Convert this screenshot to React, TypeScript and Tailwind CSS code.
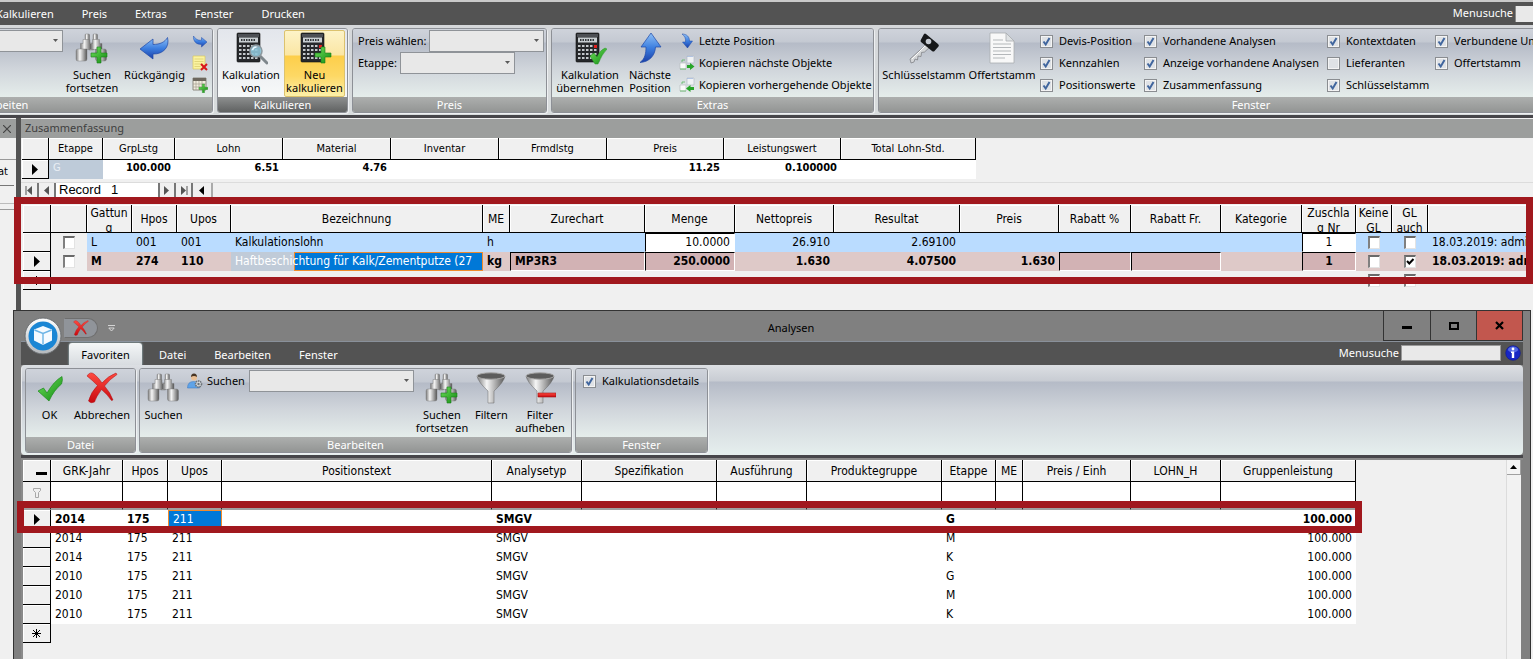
import { useState } from "react";
import type { ReactNode } from "react";
import clsx from "clsx";

const RIBBON_FONT = "font-['Noto_Sans','Open_Sans',sans-serif]";
const GRID_FONT = "font-['DejaVu_Sans_Condensed','DejaVu_Sans',sans-serif]";

/* ---------- Icons ---------- */

function Defs() {
  return (
    <svg className="absolute size-0" aria-hidden="true">
      <defs>
        <linearGradient id="metal" x1="0" x2="1" y1="0" y2="0">
          <stop offset="0" stopColor="#7a7a7a" />
          <stop offset="0.35" stopColor="#f6f6f6" />
          <stop offset="0.7" stopColor="#a2a2a2" />
          <stop offset="1" stopColor="#565656" />
        </linearGradient>
        <linearGradient id="green" x1="0" x2="1" y1="0" y2="1">
          <stop offset="0" stopColor="#6fe05c" />
          <stop offset="1" stopColor="#128a12" />
        </linearGradient>
        <linearGradient id="blue" x1="0" x2="0" y1="0" y2="1">
          <stop offset="0" stopColor="#8fc0f5" />
          <stop offset="0.5" stopColor="#3d7fe0" />
          <stop offset="1" stopColor="#1a3fa8" />
        </linearGradient>
        <linearGradient id="red" x1="0" x2="0" y1="0" y2="1">
          <stop offset="0" stopColor="#ff4a40" />
          <stop offset="1" stopColor="#c80a10" />
        </linearGradient>
        <linearGradient id="orb" x1="0" x2="0" y1="0" y2="1">
          <stop offset="0" stopColor="#ffffff" />
          <stop offset="1" stopColor="#b4b8bc" />
        </linearGradient>
      </defs>
    </svg>
  );
}

function Plus({ x, y, s = 1 }: { x: number; y: number; s?: number }) {
  return (
    <path
      transform={`translate(${x} ${y}) scale(${s})`}
      d="M6 0h4v6H16v4h-6v6H6v-6H0V6h6z"
      fill="url(#green)"
      stroke="#1a7d1a"
      strokeWidth="0.6"
    />
  );
}

function Binoculars({ plus }: { plus?: boolean }) {
  return (
    <svg width="34" height="32" viewBox="0 0 34 32">
      <g stroke="#777" strokeWidth="0.4" fill="url(#metal)">
        <rect x="10" y="2" width="4.500" height="6" rx="1" />
        <rect x="18" y="2" width="4.500" height="6" rx="1" />
        <rect x="14" y="11" width="4.500" height="7" />
        <path d="M8 7.500h7v4h1.200v6H5.500v-6H8z" />
        <path d="M17.500 7.500h7v4H27v6H16.500v-6h1z" />
        <path d="M3 17h9v10q0 2-2 2H3q-2 0-2-2v-8q0-2 2-2z" />
        <path d="M29.500 17h-9v10q0 2 2 2h7q2 0 2-2v-8q0-2-2-2z" />
      </g>
      {plus && <Plus x={16} y={15} />}
    </svg>
  );
}

function BackArrow({ size = 32 }: { size?: number }) {
  return (
    <svg width={size} height={size} viewBox="0 0 32 32">
      <path
        d="M1 17 14 7v5.500C21 12.500 26 10 28.500 5.500 31 15 24 22.500 14 22v5z"
        fill="url(#blue)"
        stroke="#1f49a8"
        strokeWidth="0.7"
      />
    </svg>
  );
}

function ForwardArrow() {
  return (
    <svg width="16" height="16" viewBox="0 0 16 16">
      <path d="M15 9 9.500 14v-2.500C4 11.500 1 8 1.500 3 4 6.500 6 7.500 9.500 7.200V4.500z" fill="url(#blue)" stroke="#1f49a8" strokeWidth="0.5" />
    </svg>
  );
}

function UpArrow() {
  return (
    <svg width="32" height="32" viewBox="0 0 32 32">
      <path d="M17 1 27 15h-5.500C21 24 15 30 6 30.500 11 27 12 21 12 15H7z" fill="url(#blue)" stroke="#1f49a8" strokeWidth="0.7" />
    </svg>
  );
}

function LastArrow() {
  return (
    <svg width="16" height="16" viewBox="0 0 16 16">
      <path d="M3 1C8 1 10.500 4 10.500 8H13.500L8.500 15 3.500 9H6.500C7 5 5.500 3 3 1z" fill="url(#blue)" stroke="#1f49a8" strokeWidth="0.5" />
    </svg>
  );
}

function NoteDelete() {
  return (
    <svg width="16" height="16" viewBox="0 0 16 16">
      <path d="M1 1h12v13H1z" fill="#fbf3a0" stroke="#d8c860" strokeWidth="0.7" />
      <path d="M2.500 4h9M2.500 6.500h9M2.500 9h9M2.500 11.500h6" stroke="#d6c86a" strokeWidth="0.7" />
      <path d="m9 9 6 6m0-6-6 6" stroke="#d8161c" strokeWidth="2" />
    </svg>
  );
}

function TableAdd() {
  return (
    <svg width="16" height="16" viewBox="0 0 16 16">
      <path d="M1 1h13v12H1z" fill="#f1ede0" stroke="#7a7468" strokeWidth="0.8" />
      <path d="M1 1h13v3H1z" fill="#6d685e" />
      <path d="M1 7h13M1 10h13M4 4v9M7 4v9M10 4v9" stroke="#a59d8c" strokeWidth="0.7" />
      <Plus x={7} y={7} s={0.55} />
    </svg>
  );
}

function Calculator({ kind }: { kind: "search" | "plus" | "check" }) {
  return (
    <svg width="34" height="34" viewBox="0 0 34 34">
      <rect x="3" y="1" width="23" height="29" rx="1" fill="#26282b" stroke="#111" strokeWidth="0.6" />
      <rect x="4" y="2" width="21" height="3" fill="#4d5055" />
      <rect x="5" y="5.500" width="19" height="5" fill="#c8ced2" />
      <path d="M7 8h15" stroke="#33373a" strokeWidth="2" strokeDasharray="1.500 1" />
      {[14, 18, 22, 26].map((y) => (
        <path key={y} d={`M5 ${y}h19`} stroke="#c4c8cc" strokeWidth="2" strokeDasharray="2.500 1.500" />
      ))}
      <rect x="21" y="13" width="3" height="3" fill="#e02020" />
      {kind === "search" && (
        <>
          <path d="m26 24 7 7" stroke="#7f878c" strokeWidth="3" strokeLinecap="round" />
          <circle cx="22" cy="19" r="6" fill="#8fc4d8" fillOpacity="0.9" stroke="#8c989e" strokeWidth="1.500" />
          <path d="M18.500 18q1-3 4-3" stroke="#e8f8ff" strokeWidth="1.500" fill="none" />
        </>
      )}
      {kind === "plus" && <Plus x={17} y={15} />}
      {kind === "check" && (
        <path d="m17 24 4-3 3 4q3-7 8-9l2 1q-5 5-9 15h-3z" fill="url(#green)" stroke="#2a9a2a" strokeWidth="0.5" />
      )}
    </svg>
  );
}

function KeyIcon() {
  return (
    <svg width="32" height="32" viewBox="0 0 32 32">
      <path d="M20 11 2 27l1 4 3-1 1-3 2.500 1 .5-4 3 .5.500-4 3-.5L23 14z" fill="#d4d6d8" stroke="#77797c" strokeWidth="0.7" />
      <path d="M18 13 4 27" stroke="#fafafa" strokeWidth="1" />
      <path d="m18 2 12 10q1.500 1 .5 2.500l-4 4.500q-1 1-2.500 0L13 10q-1-1 0-2.500L16 2q1-1 2 0z" fill="#16181a" />
      <circle cx="20.500" cy="9.500" r="2.800" fill="#c3c8d0" />
    </svg>
  );
}

function DocIcon() {
  return (
    <svg width="32" height="32" viewBox="0 0 32 32">
      <path d="M4 1h16l8 8v22H4z" fill="#f8f8f8" stroke="#a9adb0" strokeWidth="0.8" />
      <path d="M20 1v8h8z" fill="#dfe2e4" stroke="#a9adb0" strokeWidth="0.8" />
      <path d="M7 8h10M7 12h18M7 15.500h18M7 19h18M7 22.500h18M7 26h12" stroke="#b4b7ba" strokeWidth="1.200" />
    </svg>
  );
}

function CopyIcon({ back }: { back?: boolean }) {
  return (
    <svg width="16" height="16" viewBox="0 0 16 16">
      <path d="M8 1h7v7H8z" fill="#f0f2f4" stroke="#b5bcc6" strokeWidth="0.7" />
      <path d="M8.500 1.500h6" stroke="#88a8e0" strokeWidth="1" strokeDasharray="1 1" />
      <path d="M1 8h6v6H1z" fill="#fafafa" stroke="#b8bdc0" strokeWidth="0.7" />
      <path d="M1 14h6M3 7V5h3" stroke="#5cb860" strokeWidth="0.8" fill="none" />
      {back ? (
        <path d="M7 11.500 11.500 8v2H15v3h-3.500v2z" fill="#27a528" />
      ) : (
        <path d="M15.500 11.500 11 8v2H8v3h3v2z" fill="#27a528" />
      )}
    </svg>
  );
}

function CheckIcon() {
  return (
    <svg width="32" height="32" viewBox="0 0 32 32">
      <path d="m4 19 5.500-3 3.500 5Q20 9 28 4.500q1 4-.5 7.500Q20 18 15 29z" fill="url(#green)" stroke="#1c8a1c" strokeWidth="0.7" />
    </svg>
  );
}

function CrossIcon({ size = 32 }: { size?: number }) {
  return (
    <svg width={size} height={size} viewBox="0 0 32 32">
      <path
        d="M1 4Q4-1 8 2q5 4 8 9Q22 4 30 1l1 1.500Q24 7 18.500 14 24 20 27 28l-1.500.5Q21 22 15.500 17.500 10 25 8.500 30q-4 2-6-1Q5 20 11.500 13.500 6 8 1 4z"
        fill="url(#red)"
        stroke="#b00c10"
        strokeWidth="0.5"
      />
    </svg>
  );
}

function FunnelIcon({ minus }: { minus?: boolean }) {
  return (
    <svg width="32" height="32" viewBox="0 0 32 32">
      <path d="M2 4q1 6 11 15v12h6V19Q29 10 30 4z" fill="url(#metal)" stroke="#666" strokeWidth="0.5" />
      <ellipse cx="16" cy="4" rx="14" ry="3.200" fill="#5c5c5c" stroke="#a5a5a5" strokeWidth="1" />
      {minus && <path d="M14 21h18v4H14z" fill="url(#red)" stroke="#a01014" strokeWidth="0.6" />}
    </svg>
  );
}

function UserIcon() {
  return (
    <svg width="16" height="16" viewBox="0 0 16 16">
      <circle cx="7" cy="4.500" r="3" fill="#eabf94" />
      <path d="M4 4q0-3.500 3-3.500T10 4Q7 2 4 4z" fill="#473423" />
      <path d="M.5 15q0-6.500 6-6.500t6 6.500z" fill="#5fa3e8" stroke="#3676c0" strokeWidth="0.5" />
      <circle cx="11.500" cy="11" r="3" fill="#d8dce0" stroke="#6b7278" strokeWidth="1.600" strokeDasharray="1.500 0.700" />
      <circle cx="11.500" cy="11" r="1.200" fill="#6b7278" />
    </svg>
  );
}

function OrbIcon() {
  return (
    <svg width="38" height="38" viewBox="0 0 38 38">
      <circle cx="19" cy="19" r="18" fill="url(#orb)" stroke="#6c6f72" strokeWidth="1" />
      <circle cx="19" cy="19" r="14.500" fill="#1b86d4" />
      <path d="m19 9 9 3.500v11L19 28l-9-4.500v-11z" fill="#f4faff" />
      <path d="m10.500 13 8.500 3.500 8.500-3.500M19 16.500V27.500" stroke="#6cb4e6" strokeWidth="1.400" fill="none" />
    </svg>
  );
}

function InfoIcon() {
  return (
    <svg width="16" height="16" viewBox="0 0 16 16">
      <circle cx="8" cy="8" r="7.300" fill="#1726c4" stroke="#0d1690" strokeWidth="0.6" />
      <ellipse cx="8" cy="4.500" rx="5" ry="3" fill="#6f86f4" fillOpacity="0.7" />
      <circle cx="8" cy="4" r="1.400" fill="#fff" />
      <path d="M6 6.500h3.200V13H6.800V8H6z" fill="#fff" />
    </svg>
  );
}

function Triangle({ flip, bar }: { flip?: boolean; bar?: boolean }) {
  return (
    <svg width="9" height="9" viewBox="0 0 9 9" className={flip ? "rotate-180" : ""}>
      <path d="M2 0v9l5-4.500z" fill="currentColor" />
      {bar && <path d="M8 0v9" stroke="currentColor" strokeWidth="1" />}
    </svg>
  );
}

function RowPointer() {
  return (
    <svg width="6" height="11" viewBox="0 0 6 11" className="mx-auto">
      <path d="M0 0v11l6-5.500z" fill="#000" />
    </svg>
  );
}

function StarIcon() {
  return (
    <svg width="9" height="9" viewBox="0 0 9 9" className="mx-auto">
      <path d="M4.500 0v9M0 4.500h9M1 1l7 7M8 1 1 8" stroke="#000" strokeWidth="1" />
    </svg>
  );
}

/* ---------- Ribbon parts ---------- */

function Group({ label, className, active, children }: { label: string; className?: string; active?: boolean; children: ReactNode }) {
  return (
    <section className={clsx("flex h-[85px] shrink-0 flex-col overflow-hidden rounded-[3px] border border-[#8d9096] shadow-[1px_1px_0_#eef0f2]", className)}>
      <div
        className={clsx(
          "flex h-[68px] items-start pt-px",
          active
            ? "bg-linear-to-b from-[#e3e6ec] via-[#eceef1] to-[#f7f9f9]"
            : "bg-[linear-gradient(#cfd3db,#c4c9d2_13px,#b5bbc7_14px,#d0d5db_40px,#e5edeb)]"
        )}
      >
        {children}
      </div>
      <h2
        className={clsx(
          "flex h-[15px] items-center justify-center text-[11px] leading-[14px] text-white",
          active ? "bg-linear-to-b from-[#8e9090] to-[#606262]" : "bg-linear-to-b from-[#adafae] to-[#939594]"
        )}
      >
        {label}
      </h2>
    </section>
  );
}

function BigButton({ icon, lines, className, hot }: { icon: ReactNode; lines: string[]; className: string; hot?: boolean }) {
  return (
    <button
      type="button"
      className={clsx(
        "flex h-[67px] shrink-0 flex-col items-center overflow-visible pt-[2px] text-[11px] leading-[13px] whitespace-nowrap text-black",
        hot && "rounded-[2px] border border-[#dcc26e] bg-[linear-gradient(#fdf3c8,#fbe6a4_24px,#fdce4a_25px,#fdd865_45px,#fdf0a8)] pt-px",
        className
      )}
    >
      <span className="flex h-9 items-start justify-center">{icon}</span>
      {lines.map((l) => (
        <span key={l}>{l}</span>
      ))}
    </button>
  );
}

function SmallButton({ icon, label }: { icon: ReactNode; label: string }) {
  return (
    <button type="button" className="flex h-[22px] items-center gap-1 text-[11px] whitespace-nowrap text-black">
      {icon}
      {label}
    </button>
  );
}

function Combo({ label, className }: { label: string; className: string }) {
  return (
    <span className={clsx("relative block h-[22px] shrink-0", className)}>
      <select aria-label={label} className="block size-full appearance-none border border-[#8f9398] bg-[#e8e8e8] text-[11px]" />
      <svg width="5" height="3" viewBox="0 0 5 3" className="pointer-events-none absolute top-[9px] right-[5px]">
        <path d="M0 0h5L2.500 3z" fill="#5a5a5a" />
      </svg>
    </span>
  );
}

function RibbonCheck({ label, on = true }: { label: string; on?: boolean }) {
  const [checked, setChecked] = useState(on);
  return (
    <label className="flex h-[22px] items-center gap-[6px] text-[11px] whitespace-nowrap text-black">
      <span className="relative block size-[13px]">
        <input
          type="checkbox"
          checked={checked}
          onChange={() => setChecked(!checked)}
          className="block size-[13px] appearance-none border border-[#8a8d91] bg-[#dfe2e6] shadow-[inset_0_0_0_1px_#f4f4f4]"
        />
        {checked && (
          <svg width="13" height="13" viewBox="0 0 13 13" className="pointer-events-none absolute inset-0">
            <path d="m3.500 6.500 2.200 3L9.500 3" stroke="#41669e" strokeWidth="2" fill="none" />
          </svg>
        )}
      </span>
      {label}
    </label>
  );
}

/* ---------- Grid parts ---------- */

function HeadCell({ children, label }: { children?: ReactNode; label?: string }) {
  return (
    <th className="border-r border-b border-black bg-[#f0f0f0] px-0 pt-px pb-0 align-middle font-normal shadow-[inset_1px_1px_0_#fff]" aria-label={label}>
      {children}
    </th>
  );
}

function RowHead({ children }: { children?: ReactNode }) {
  return (
    <th className="border-r border-b border-black bg-[#f0f0f0] p-0 align-middle shadow-[inset_1px_1px_0_#fff]">{children}</th>
  );
}

function GridCheck({ label, on = false }: { label: string; on?: boolean }) {
  const [checked, setChecked] = useState(on);
  return (
    <span className="relative mx-auto block h-[13px] w-3">
      <input
        type="checkbox"
        aria-label={label}
        checked={checked}
        onChange={() => setChecked(!checked)}
        className="block h-[13px] w-3 appearance-none border-t-2 border-r border-b border-l-2 border-t-[#696969] border-r-[#e3e3e3] border-b-[#e3e3e3] border-l-[#808080] bg-white"
      />
      {checked && (
        <svg width="12" height="13" viewBox="0 0 12 13" className="pointer-events-none absolute inset-0">
          <path d="m3 6 2.300 2.500L9.500 4" stroke="#000" strokeWidth="2" fill="none" />
        </svg>
      )}
    </span>
  );
}

/* ---------- Main window ---------- */

function MainRibbon() {
  return (
    <header className={RIBBON_FONT}>
      <div className="h-[2px] bg-[#c9c9c9]" />
      <nav className="flex h-[23px] items-center bg-[#535353] text-[11px] text-white">
        <div className="-ml-1 flex flex-1 gap-[28px] pt-[2px]">
          {["Kalkulieren", "Preis", "Extras", "Fenster", "Drucken"].map((t) => (
            <button type="button" key={t}>
              {t}
            </button>
          ))}
        </div>
        <label htmlFor="main-search" className="pr-[2px]">
          Menusuche
        </label>
        <input id="main-search" className="h-4 w-[18px] border-l border-[#8a8a8a] bg-[#e9e9e9]" />
      </nav>
      <div className="flex gap-1 overflow-hidden bg-linear-to-b from-[#d5d7da] to-[#d8dcdd] pt-[3px] pb-[2px]">
        <Group label="Bearbeiten" className="-ml-[213px] w-[426px]">
          <div className="flex flex-1 items-start justify-end">
            <Combo label="Suche" className="w-[90px]" />
            <BigButton icon={<Binoculars plus />} lines={["Suchen", "fortsetzen"]} className="w-[58px]" />
            <BigButton icon={<BackArrow />} lines={["Rückgängig"]} className="w-[67px]" />
            <div className="flex w-[24px] flex-col items-center gap-[6px] pt-[3px]">
              <button type="button" aria-label="Wiederholen"><ForwardArrow /></button>
              <button type="button" aria-label="Notiz löschen"><NoteDelete /></button>
              <button type="button" aria-label="Tabelle hinzufügen"><TableAdd /></button>
            </div>
          </div>
        </Group>
        <Group label="Kalkulieren" className="w-[131px]" active>
          <BigButton icon={<Calculator kind="search" />} lines={["Kalkulation", "von"]} className="w-[66px]" />
          <BigButton icon={<Calculator kind="plus" />} lines={["Neu", "kalkulieren"]} className="w-[61px]" hot />
        </Group>
        <Group label="Preis" className="w-[195px]">
          <div className="pl-[5px] text-[11px]">
            <div className="flex items-center">
              <span className="w-[71px]">Preis wählen:</span>
              <Combo label="Preis wählen" className="w-[115px]" />
            </div>
            <div className="flex items-center">
              <span className="w-[42px]">Etappe:</span>
              <Combo label="Etappe" className="w-[115px]" />
            </div>
          </div>
        </Group>
        <Group label="Extras" className="w-[323px]">
          <BigButton icon={<Calculator kind="check" />} lines={["Kalkulation", "übernehmen"]} className="w-[76px]" />
          <BigButton icon={<UpArrow />} lines={["Nächste", "Position"]} className="w-[44px]" />
          <div className="pl-[7px]">
            <SmallButton icon={<LastArrow />} label="Letzte Position" />
            <SmallButton icon={<CopyIcon />} label="Kopieren nächste Objekte" />
            <SmallButton icon={<CopyIcon back />} label="Kopieren vorhergehende Objekte" />
          </div>
        </Group>
        <Group label="Fenster" className="w-[746px]">
          <BigButton icon={<KeyIcon />} lines={["Schlüsselstamm"]} className="w-[90px]" />
          <BigButton icon={<DocIcon />} lines={["Offertstamm"]} className="w-[66px]" />
          <div className="grid grid-cols-[104px_183px_108px_auto] pl-[5px]">
            <RibbonCheck label="Devis-Position" />
            <RibbonCheck label="Vorhandene Analysen" />
            <RibbonCheck label="Kontextdaten" />
            <RibbonCheck label="Verbundene Umsätze" />
            <RibbonCheck label="Kennzahlen" />
            <RibbonCheck label="Anzeige vorhandene Analysen" />
            <RibbonCheck label="Lieferanten" on={false} />
            <RibbonCheck label="Offertstamm" />
            <RibbonCheck label="Positionswerte" />
            <RibbonCheck label="Zusammenfassung" />
            <RibbonCheck label="Schlüsselstamm" />
          </div>
        </Group>
      </div>
      <div className="h-[3px] bg-[#47464a]" />
    </header>
  );
}

const SUMMARY = [
  { name: "Etappe", value: "G" },
  { name: "GrpLstg", value: "100.000" },
  { name: "Lohn", value: "6.51" },
  { name: "Material", value: "4.76" },
  { name: "Inventar", value: "" },
  { name: "Frmdlstg", value: "" },
  { name: "Preis", value: "11.25" },
  { name: "Leistungswert", value: "0.100000" },
  { name: "Total Lohn-Std.", value: "" },
];
const SUMMARY_WIDTHS = [27, 54, 72, 108, 108, 108, 108, 117, 117, 135];

function Summary() {
  return (
    <section>
      <h2 className={clsx("mt-px flex h-[19px] items-center bg-[#9c9e9d] pl-1 text-[11px] text-[#3f3f3f]", RIBBON_FONT)}>
        Zusammenfassung
      </h2>
      <table className={clsx("ml-px w-[954px] table-fixed border-separate border-spacing-0 text-[11px] leading-[14px]", GRID_FONT)}>
        <colgroup>
          {SUMMARY_WIDTHS.map((w, i) => (
            <col key={i} style={{ width: w }} />
          ))}
        </colgroup>
        <thead>
          <tr className="h-[22px]">
            <HeadCell label="Zeile" />
            {SUMMARY.map((c) => (
              <HeadCell key={c.name}>{c.name}</HeadCell>
            ))}
          </tr>
        </thead>
        <tbody>
          <tr className="h-[19px] bg-white">
            <RowHead>
              <RowPointer />
            </RowHead>
            {SUMMARY.map((c, i) => (
              <td
                key={c.name}
                className={clsx(
                  "px-1 pt-0 pb-1",
                  i === 0 ? "bg-[#becbd9] text-left font-normal text-[#e9eef4]" : "text-right font-bold"
                )}
              >
                {c.value}
              </td>
            ))}
          </tr>
        </tbody>
      </table>
      <div className="mt-[3px] flex h-[15px] items-center border-t border-[#dcdcdc] pl-px font-['Liberation_Sans',Arial,sans-serif] text-[13px] text-[#555]">
        <button type="button" aria-label="Erster" className="flex h-[14px] w-[17px] items-center justify-center border-r-2 border-[#777]"><Triangle flip bar /></button>
        <button type="button" aria-label="Zurück" className="flex h-[14px] w-[17px] items-center justify-center border-r-2 border-[#777]"><Triangle flip /></button>
        <label htmlFor="record" className="h-[14px] bg-white px-[3px] leading-[14px] text-black">Record</label>
        <input id="record" defaultValue="1" className="h-[14px] w-[54px] bg-white pl-[7px] text-black" />
        <button type="button" aria-label="Weiter" className="flex h-[14px] w-[18px] items-center justify-center border-x-2 border-[#777]"><Triangle /></button>
        <button type="button" aria-label="Letzter" className="flex h-[14px] w-[17px] items-center justify-center border-r-2 border-[#777]"><Triangle bar /></button>
        <button type="button" aria-label="Links" className="flex h-[14px] w-[20px] items-center justify-center border-r-2 border-[#aaa] text-black"><Triangle flip /></button>
      </div>
    </section>
  );
}

const POS_WIDTHS = [28, 36, 45, 45, 54, 252, 27, 135, 90, 99, 126, 99, 72, 90, 81, 54, 36, 36];
const POS_HEADS: string[][] = [
  [""], [""], ["Gattun", "g"], ["Hpos"], ["Upos"], ["Bezeichnung"], ["ME"], ["Zurechart"], ["Menge"], ["Nettopreis"], ["Resultat"],
  ["Preis"], ["Rabatt %"], ["Rabatt Fr."], ["Kategorie"], ["Zuschla", "g Nr"], ["Keine", "GL"], ["GL", "auch"], [""],
];
const SUNKEN = "border border-t-black border-l-black border-r-white border-b-white";

function PositionGrid() {
  return (
    <table className={clsx("mt-2 ml-[2px] w-[calc(100%-2px)] min-w-[1510px] table-fixed border-separate border-spacing-0 text-[12px] leading-[15px]", GRID_FONT)}>
      <colgroup>
        {POS_WIDTHS.map((w, i) => (
          <col key={i} style={{ width: w }} />
        ))}
        <col />
      </colgroup>
      <thead>
        <tr className="h-[28px]">
          {POS_HEADS.map((lines, i) => (
            <HeadCell key={i} label={lines.join("") || "Spalte"}>
              <div className={clsx("flex h-[26px] flex-col items-center overflow-hidden whitespace-nowrap", lines.length === 1 && "justify-center")}>
                {lines.map((l) => (
                  <span key={l}>{l}</span>
                ))}
              </div>
            </HeadCell>
          ))}
        </tr>
      </thead>
      <tbody className="whitespace-nowrap">
        <tr className="h-[19px] bg-[#badcff] *:px-1 *:py-0 *:align-middle">
          <RowHead />
          <td className="bg-[#f0f0f0]"><GridCheck label="Zeile 1 wählen" /></td>
          <td>L</td>
          <td>001</td>
          <td>001</td>
          <td>Kalkulationslohn</td>
          <td>h</td>
          <td />
          <td className={clsx("bg-white text-right", SUNKEN)}>10.0000</td>
          <td className="text-right">26.910</td>
          <td className="text-right">2.69100</td>
          <td />
          <td />
          <td />
          <td />
          <td className={clsx("bg-white text-center", SUNKEN)}>1</td>
          <td><GridCheck label="Keine GL 1" /></td>
          <td><GridCheck label="GL auch 1" /></td>
          <td className="overflow-hidden">18.03.2019: admin</td>
        </tr>
        <tr className="h-[19px] bg-[#dec9c8] font-bold *:px-1 *:py-0 *:align-middle">
          <RowHead><RowPointer /></RowHead>
          <td className="bg-[#f0f0f0]"><GridCheck label="Zeile 2 wählen" /></td>
          <td>M</td>
          <td>274</td>
          <td>110</td>
          <td className="relative overflow-hidden bg-[#c0cbd8] font-normal text-white">
            <span className="absolute inset-y-0 right-0 left-[63px] border border-[#f08a2c] bg-[#0078d7]" />
            <span className="relative">Haftbeschichtung für Kalk/Zementputze (27</span>
          </td>
          <td>kg</td>
          <td className={clsx("bg-[#d2b2b4]", SUNKEN)}>MP3R3</td>
          <td className={clsx("bg-[#d2b2b4] text-right", SUNKEN)}>250.0000</td>
          <td className="text-right">1.630</td>
          <td className="text-right">4.07500</td>
          <td className="text-right">1.630</td>
          <td className={clsx("bg-[#d2b2b4]", SUNKEN)} />
          <td className={clsx("bg-[#d2b2b4]", SUNKEN)} />
          <td />
          <td className={clsx("bg-[#d2b2b4] text-center", SUNKEN)}>1</td>
          <td><GridCheck label="Keine GL 2" /></td>
          <td><GridCheck label="GL auch 2" on /></td>
          <td className="overflow-hidden">18.03.2019: admin</td>
        </tr>
        <tr className="h-[19px] *:p-0">
          <RowHead><StarIcon /></RowHead>
          <td colSpan={15} />
          <td><GridCheck label="Keine GL neu" /></td>
          <td><GridCheck label="GL auch neu" /></td>
          <td />
        </tr>
      </tbody>
    </table>
  );
}

/* ---------- Analysen window ---------- */

const ANA_COLS = [
  { name: "GRK-Jahr", w: 72 },
  { name: "Hpos", w: 45 },
  { name: "Upos", w: 54 },
  { name: "Positionstext", w: 270 },
  { name: "Analysetyp", w: 90 },
  { name: "Spezifikation", w: 135 },
  { name: "Ausführung", w: 90 },
  { name: "Produktegruppe", w: 135 },
  { name: "Etappe", w: 54 },
  { name: "ME", w: 27 },
  { name: "Preis / Einh", w: 108 },
  { name: "LOHN_H", w: 90 },
  { name: "Gruppenleistung", w: 135 },
];
const ANA_ROWS = [
  ["2014", "G"],
  ["2014", "M"],
  ["2014", "K"],
  ["2010", "G"],
  ["2010", "M"],
  ["2010", "K"],
];

function AnalysisGrid() {
  return (
    <div className="flex flex-1 border-t-2 border-l-2 border-[#8a8a8a] bg-[#f0f0f0]">
      <div className="relative flex-1">
        <table className={clsx("w-[1333px] table-fixed border-separate border-spacing-0 text-[12px] leading-[15px]", GRID_FONT)}>
          <colgroup>
            <col style={{ width: 28 }} />
            {ANA_COLS.map((c) => (
              <col key={c.name} style={{ width: c.w }} />
            ))}
          </colgroup>
          <thead>
            <tr className="h-[22px]">
              <HeadCell label="Zeile">
                <div className="mt-1 ml-auto mr-[3px] h-[3px] w-[11px] bg-black" />
              </HeadCell>
              {ANA_COLS.map((c) => (
                <HeadCell key={c.name}>{c.name}</HeadCell>
              ))}
            </tr>
            <tr className="h-[28px] bg-white">
              <th className="border-r border-b-2 border-r-black border-b-[#a0a0a0] bg-[#f0f0f0] p-0">
                <svg width="8" height="10" viewBox="0 0 8 10" className="mx-auto -mt-1">
                  <path d="M.5.500h7v2l-2 2v5h-3v-5l-2-2z" stroke="#a8a8a8" fill="none" />
                </svg>
              </th>
              {ANA_COLS.map((c) => (
                <td key={c.name} className="border-r border-b-2 border-r-black border-b-[#a0a0a0] p-0" />
              ))}
            </tr>
          </thead>
          <tbody>
            {ANA_ROWS.map(([year, stage], i) => (
              <tr key={i} className={clsx("h-[19px] bg-white *:px-1 *:py-0", i === 0 && "font-bold")}>
                <RowHead>{i === 0 && <RowPointer />}</RowHead>
                <td>{year}</td>
                <td>175</td>
                <td className={i === 0 ? "border border-[#f08a2c] bg-[#0078d7] font-normal text-white" : ""}>211</td>
                <td />
                <td>SMGV</td>
                <td colSpan={3} />
                <td>{stage}</td>
                <td colSpan={3} />
                <td className="text-right">100.000</td>
              </tr>
            ))}
            <tr className="h-[19px]">
              <RowHead><StarIcon /></RowHead>
              <td colSpan={13} />
            </tr>
          </tbody>
        </table>
        {/* highlight around the matching analysis */}
        <div className="pointer-events-none absolute top-[41px] -left-[6px] h-[32px] w-[1345px] border-[7px] border-[#a1181e]" />
      </div>
      <div className="w-[17px] border-r-2 border-l border-r-[#808080] border-l-[#dcdcdc] bg-[#f2f2f2]">
        <button type="button" aria-label="Nach oben" className="flex h-[15px] w-full items-center justify-center border-r border-b border-[#a0a0a0] bg-[#f4f4f4]">
          <svg width="7" height="4" viewBox="0 0 7 4"><path d="M0 4h7L3.500 0z" fill="#000" /></svg>
        </button>
      </div>
    </div>
  );
}

function AnalysisWindow() {
  return (
    <div className={clsx("absolute top-[310px] right-[2px] bottom-0 left-[13px] flex min-h-[349px] flex-col border border-b-0 border-[#333] bg-[#808080] px-[7px]", RIBBON_FONT)}>
      <div className="flex h-[30px] items-start">
        <div className="flex w-[178px] items-center pt-[7px] pl-[43px]">
          <button type="button" aria-label="Schliessen" className="flex h-[20px] w-[34px] items-center justify-center rounded-r-full border border-[#6f6f6f] border-l-transparent bg-[#90949a]">
            <CrossIcon size={16} />
          </button>
          <svg width="7" height="7" viewBox="0 0 7 7" className="ml-[10px]">
            <path d="M0 .5h7M.8 3h5.400L3.500 6z" stroke="#dedede" strokeWidth="0.900" fill="none" />
          </svg>
        </div>
        <h1 className="flex-1 pt-[9px] text-center text-[11px] leading-[15px] text-black">Analysen</h1>
        <div className="flex h-[30px] border-x border-b border-[#333]">
          <button type="button" aria-label="Minimieren" className="flex w-[47px] items-center justify-center border-r border-[#333]">
            <span className="mt-1 h-[3px] w-[10px] bg-black" />
          </button>
          <button type="button" aria-label="Maximieren" className="flex w-[46px] items-center justify-center border-r border-[#333]">
            <span className="h-[8px] w-[10px] border-2 border-black" />
          </button>
          <button type="button" aria-label="Fenster schliessen" className="flex w-[45px] items-center justify-center bg-[#c2574e]">
            <svg width="9" height="9" viewBox="0 0 9 9"><path d="m1 1 7 7M8 1 1 8" stroke="#000" strokeWidth="2.200" /></svg>
          </button>
        </div>
      </div>
      <div className="absolute top-[6px] left-[10px]"><OrbIcon /></div>
      <nav className="flex h-[24px] items-end border-t border-[#89909a] bg-[#535353] pl-[48px] text-[11px] text-white">
        <button type="button" className="h-[22px] w-[73px] rounded-t-[3px] bg-linear-to-b from-[#f4f6f7] to-[#d8dce0] pt-[2px] text-black shadow-[0_0_2px_#bfe8f0]">Favoriten</button>
        <div className="flex h-[22px] flex-1 items-center gap-[28px] pt-[2px] pl-[17px]">
          {["Datei", "Bearbeiten", "Fenster"].map((t) => (
            <button type="button" key={t}>{t}</button>
          ))}
        </div>
        <div className="flex h-[22px] items-center pb-[2px]">
          <label htmlFor="window-search" className="pr-[2px]">Menusuche</label>
          <input id="window-search" className="h-4 w-[100px] border border-[#999] bg-[#e9e9e9]" />
          <span className="mr-[2px] ml-1"><InfoIcon /></span>
        </div>
      </nav>
      <div className="flex gap-[3px] rounded-[4px] border-l border-[#e8eaec] bg-[linear-gradient(#dcdfe3,#c8ccd3_16px,#b5bbc7_17px,#cfd4da_45px,#e6efee)] pt-[3px] pb-[2px] pl-[3px]">
        <Group label="Datei" className="w-[111px]">
          <BigButton icon={<CheckIcon />} lines={["OK"]} className="w-[47px]" />
          <BigButton icon={<CrossIcon />} lines={["Abbrechen"]} className="w-[58px]" />
        </Group>
        <Group label="Bearbeiten" className="w-[433px]">
          <BigButton icon={<Binoculars />} lines={["Suchen"]} className="w-[47px]" />
          <SmallButton icon={<UserIcon />} label="Suchen" />
          <Combo label="Suchen" className="ml-1 w-[165px]" />
          <BigButton icon={<Binoculars plus />} lines={["Suchen", "fortsetzen"]} className="w-[56px]" />
          <BigButton icon={<FunnelIcon />} lines={["Filtern"]} className="w-[43px]" />
          <BigButton icon={<FunnelIcon minus />} lines={["Filter", "aufheben"]} className="w-[54px]" />
        </Group>
        <Group label="Fenster" className="w-[133px]">
          <div className="pl-[7px]">
            <RibbonCheck label="Kalkulationsdetails" />
          </div>
        </Group>
      </div>
      <div className="h-[3px] bg-[#47464a]" />
      <AnalysisGrid />
    </div>
  );
}

export default function App() {
  return (
    <div className="relative flex min-h-screen flex-col overflow-hidden bg-[#f0f0f0] text-black">
      <Defs />
      <MainRibbon />
      <div className="flex flex-1">
        <aside className={clsx("w-4 shrink-0 overflow-hidden bg-[#f0f0f0] text-[11px]", GRID_FONT)}>
          <div className="mt-px flex h-[19px] items-center bg-[#9c9e9d] pl-[3px]">
            <svg width="8" height="8" viewBox="0 0 8 8"><path d="m0 0 8 8M8 0 0 8" stroke="#444" strokeWidth="1.200" /></svg>
          </div>
          <div className="h-[22px] border-b border-[#999]" />
          <div className="mr-[2px] -ml-[2px] flex h-[26px] items-center border-b border-[#777]">at</div>
          <div className="h-[18px] border-b border-[#bbb]" />
          <div className="h-[6px] border-b border-[#999]" />
        </aside>
        <main className="min-w-0 flex-1 overflow-hidden border-l-[5px] border-[#535353]">
          <Summary />
          <PositionGrid />
        </main>
      </div>
      {/* highlight around the position rows */}
      <div className="pointer-events-none absolute top-[197px] right-0 left-[14px] h-[87px] border-[7px] border-[#a1181e]" />
      <AnalysisWindow />
    </div>
  );
}
